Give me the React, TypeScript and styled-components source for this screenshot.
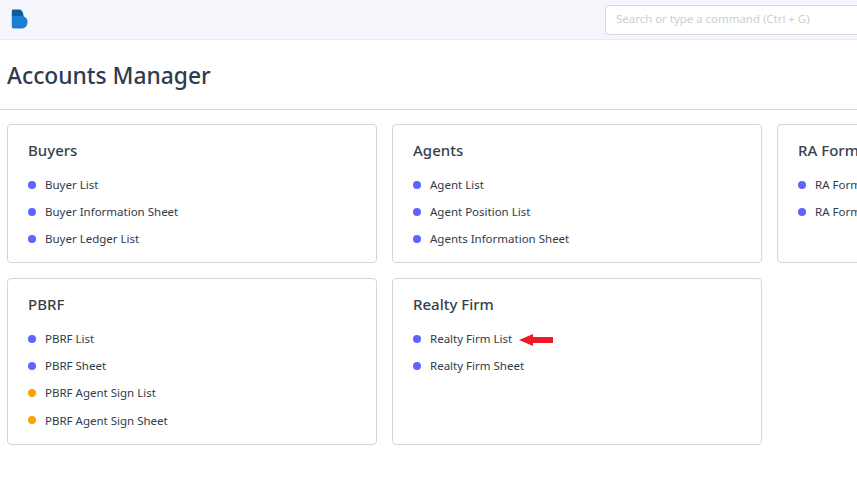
import React from "react";
import styled, { createGlobalStyle } from "styled-components";

const Global = createGlobalStyle`
  html, body { margin: 0; padding: 0; background: #fff; overflow: hidden; }
  body { font-family: "Noto Sans", "Open Sans", sans-serif; }
`;
const Page = styled.div`
  width: 857px; height: 479px; overflow: hidden; display: flex; flex-direction: column;
`;
const Navbar = styled.header`
  height: 40px; flex: none; box-sizing: border-box; background: #f4f6fb; border-bottom: 1px solid #e8ecf1;
  display: flex; align-items: center; padding: 0 0 0 11px;
`;
const Logo = styled.svg`
  width: 17px; height: 20px; flex: none; margin-top: -1px;
`;
const Search = styled.div`
  margin-left: 577px; width: 270px; flex: none; height: 30px; box-sizing: border-box;
  background: #fff; border: 1px solid #d1d8e0; border-radius: 4px; padding: 0 0 2px 10px;
  display: flex; align-items: center; font-size: 11.45px; color: #c8d0d8; white-space: nowrap;
`;
const TitleBar = styled.div`
  height: 70px; flex: none; box-sizing: border-box; border-bottom: 1px solid #d5d8dc;
  padding: 18px 0 0 7px;
`;
const Title = styled.h1`
  margin: 0; font-size: 22.8px; line-height: 36px; font-weight: 500; color: #2f3b4c;
`;
const Grid = styled.main`
  display: grid; grid-template-columns: repeat(3, 370px); grid-template-rows: 139px 167px;
  gap: 15px; padding: 14px 0 0 7px; width: 1200px;
`;
const Card = styled.section`
  box-sizing: border-box; border: 1px solid #d1d8dd; border-radius: 4px; padding: 14px 20px 0;
`;
const CardTitle = styled.h2`
  margin: 0 0 10px; font-size: 15px; line-height: 22px; font-weight: 500; color: #36414c;
`;
const List = styled.ul`
  list-style: none; margin: 0; padding: 0; display: flex; flex-direction: column;
`;
const Row = styled.li`
  height: 27px; display: flex; align-items: center; gap: 9px; font-size: 11.5px;
  color: #2f3b4c; white-space: nowrap;
  &:nth-child(4) { height: 28px; }
`;
const Dot = styled.span<{ $tone: "blue" | "orange" }>`
  width: 8px; height: 8px; border-radius: 50%; flex: none;
  background: ${(p) => (p.$tone === "blue" ? "#5e64ff" : "#ffa00a")};
`;
const Arrow = styled.svg`
  width: 34px; height: 14px; flex: none; margin-left: -2px; margin-top: 2px;
`;

type Item = { label: string; tone?: "blue" | "orange"; arrow?: boolean };
const cards: { title: string; items: Item[] }[] = [
  { title: "Buyers", items: [{ label: "Buyer List" }, { label: "Buyer Information Sheet" }, { label: "Buyer Ledger List" }] },
  { title: "Agents", items: [{ label: "Agent List" }, { label: "Agent Position List" }, { label: "Agents Information Sheet" }] },
  { title: "RA Forms", items: [{ label: "RA Form List" }, { label: "RA Form Sheet" }] },
  { title: "PBRF", items: [{ label: "PBRF List" }, { label: "PBRF Sheet" }, { label: "PBRF Agent Sign List", tone: "orange" }, { label: "PBRF Agent Sign Sheet", tone: "orange" }] },
  { title: "Realty Firm", items: [{ label: "Realty Firm List", arrow: true }, { label: "Realty Firm Sheet" }] },
];

export default function App() {
  return (
    <Page>
      <Global />
      <Navbar>
        <Logo viewBox="0 0 17 20">
          <path d="M2.5 0.5H8C10.8 0.5 12.4 3 12.6 8H0.8V2.2C0.8 1 1.4 0.5 2.5 0.5Z" fill="#0c5f9e" />
          <path d="M0.8 7H10.5C14 7 16.5 9.5 16.5 13C16.5 17 14 19.5 10.5 19.5H2.5C1.4 19.5 0.8 18.8 0.8 17.8Z" fill="#1a7fd4" />
        </Logo>
        <Search>Search or type a command (Ctrl + G)</Search>
      </Navbar>
      <TitleBar>
        <Title>Accounts Manager</Title>
      </TitleBar>
      <Grid>
        {cards.map((c) => (
          <Card key={c.title}>
            <CardTitle>{c.title}</CardTitle>
            <List>
              {c.items.map((i) => (
                <Row key={i.label}>
                  <Dot $tone={i.tone ?? "blue"} />
                  {i.label}
                  {i.arrow && (
                    <Arrow viewBox="0 0 34 14">
                      <path d="M0 7L14 1V4H34V10H14V13Z" fill="#ed1c24" />
                    </Arrow>
                  )}
                </Row>
              ))}
            </List>
          </Card>
        ))}
      </Grid>
    </Page>
  );
}
